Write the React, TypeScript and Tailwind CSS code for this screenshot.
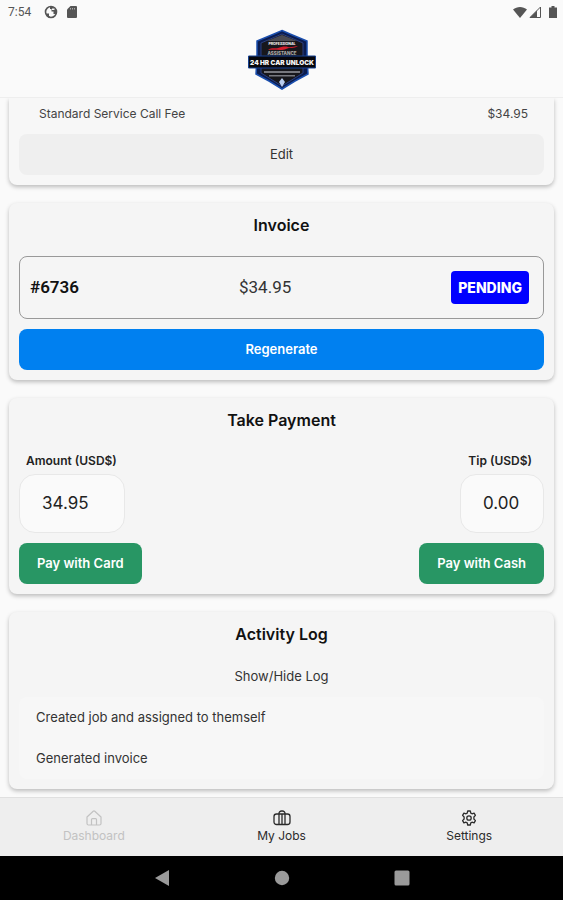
import { useState } from "react";
import type { ReactNode } from "react";

const activity = ["Created job and assigned to themself", "Generated invoice"];

function StatusBar() {
  return (
    <div className="flex h-6 items-center justify-between pl-2 pr-1 text-[#555]">
      <div className="flex items-center">
        <span className="w-9 font-[Roboto,sans-serif] text-xs">7:54</span>
        <svg viewBox="0 0 14 14" className="h-[14px] w-[14px]" aria-hidden="true">
          <circle cx="7" cy="7" r="5.5" fill="none" stroke="currentColor" strokeWidth="1.6" />
          <path d="M7 1.500a5.500 5.500 0 0 1 5 7.500H9.500V6.500H7.500V4H6V2z" fill="currentColor" />
          <path d="M8 3.500h2.500V5H8z" fill="#fafafa" />
          <path d="M2 8.500h3V11l2 1.500H5L2.500 10.500z" fill="currentColor" />
        </svg>
        <svg viewBox="0 0 12 14" className="ml-2 h-[14px] w-3" aria-hidden="true">
          <path d="M4.500 1H10a1 1 0 0 1 1 1v10a1 1 0 0 1-1 1H2a1 1 0 0 1-1-1V4.500z" fill="currentColor" />
          <path d="M4.500 3v1.500M6.500 3v1.500M8.500 3v1.500" stroke="#aaa" strokeWidth="1" />
        </svg>
      </div>
      <div className="flex items-center gap-[2px]">
        <svg viewBox="0 0 14 12" className="h-3 w-[14px]" aria-hidden="true">
          <path d="M0 3.500C4 0 10 0 14 3.500L7 12z" fill="currentColor" />
        </svg>
        <svg viewBox="0 0 12 12" className="h-3 w-3" aria-hidden="true">
          <path d="M11.500 1v10.500H1z" fill="none" stroke="currentColor" />
          <path d="M8 4.500v7H1z" fill="currentColor" />
        </svg>
        <svg viewBox="0 0 12 14" className="ml-1 h-[14px] w-3" aria-hidden="true">
          <path d="M4.500 1h3v1.500H10V13H2V2.500h2.500z" fill="currentColor" />
        </svg>
      </div>
    </div>
  );
}

function Logo() {
  return (
    <svg viewBox="0 0 70 62" className="h-[62px] w-[70px]" role="img" aria-label="24 HR Car Unlock">
      <path d="M35 1.500 43 5l17 7v16l1 17-13 7-13 8-13-8-13-7 1-17V12l17-7z" fill="#0b1c4f" stroke="#1b4fae" strokeWidth="1.500" />
      <path d="M35 5 56 14v30L35 57 14 44V14z" fill="#17171c" stroke="#2a3f80" />
      <path d="M20 12 35 6l15 6z" fill="#4b4b52" />
      <text x="35" y="15.500" textAnchor="middle" fontSize="3.500" fontWeight="800" fill="#eee">PROFESSIONAL</text>
      <path d="M21 21c4-3 7-1 10-2s7-2 10-1 6-1 10-1c-5 3-8 1-12 3s-11 0-18 1z" fill="#d31d2c" />
      <text x="35" y="25.500" textAnchor="middle" fontSize="4.500" fontWeight="800" fill="#aaa">ASSISTANCE</text>
      <path d="M1.500 27h67v12h-67z" fill="#07070c" stroke="#16418f" strokeWidth="1" />
      <text x="35" y="35.500" textAnchor="middle" fontSize="6.500" fontWeight="900" fill="#f4f4f4">24 HR CAR UNLOCK</text>
      <path d="M17 42h36v2H17zM22 46h26v1.500H22z" fill="#77787f" />
      <path d="m35 49 3 4-3 5-3-5z" fill="#b9cdf0" />
    </svg>
  );
}

function HomeIcon() {
  return (
    <svg viewBox="0 0 16 16" className="h-4 w-4" fill="none" stroke="currentColor" strokeWidth="1.200" aria-hidden="true">
      <path d="M1 7 7.200 1.300a1.200 1.200 0 0 1 1.600 0L15 7v6.500A1.500 1.500 0 0 1 13.500 15h-11A1.500 1.500 0 0 1 1 13.500zM5.500 15V9.500c0-.6.3-.9.900-.9h3.200c.6 0 .9.3.9.900V15" strokeLinejoin="round" />
    </svg>
  );
}

function CaseIcon() {
  return (
    <svg viewBox="0 0 18 16" className="h-4 w-[18px]" fill="none" stroke="currentColor" strokeWidth="1.300" aria-hidden="true">
      <rect x="1" y="4" width="16" height="10.500" rx="2.500" />
      <path d="M6 14.500V3.500A2.500 2.500 0 0 1 8.500 1h1A2.500 2.500 0 0 1 12 3.500v11M9 4v10.500" />
    </svg>
  );
}

function GearIcon() {
  return (
    <svg viewBox="0 0 16 16" className="h-4 w-4" fill="none" stroke="currentColor" strokeWidth="1.300" strokeLinejoin="round" aria-hidden="true">
      <path d="M6.700 1h2.600l.5 2.100 1.200.7 2.100-.6 1.300 2.200L12.900 7v2l1.500 1.600-1.300 2.200-2.100-.6-1.200.7L9.300 15H6.700l-.5-2.100-1.200-.7-2.100.6-1.300-2.200L3.100 9V7L1.600 5.400l1.300-2.200 2.100.6 1.200-.7z" />
      <circle cx="8" cy="8" r="2.200" />
    </svg>
  );
}

function Card({ title, children }: { title: string; children: ReactNode }) {
  return (
    <section className="rounded-lg bg-[#f5f5f5] p-[10px] shadow-[0_2px_4px_rgba(0,0,0,0.25)]">
      <h2 className="text-center text-base font-semibold leading-6 text-[#111]">{title}</h2>
      {children}
    </section>
  );
}

function NavItem({ label, icon, muted }: { label: string; icon: ReactNode; muted?: boolean }) {
  return (
    <a
      href="#"
      className={`flex flex-1 flex-col items-center pt-3 pb-[11px] text-xs leading-[19px] ${
        muted ? "text-[#c2c2c2]" : "text-[#2b2b2b]"
      }`}
    >
      {icon}
      {label}
    </a>
  );
}

export default function App() {
  const [amount, setAmount] = useState("34.95");
  const [tip, setTip] = useState("0.00");
  const [showLog, setShowLog] = useState(true);

  return (
    <div className="flex min-h-screen flex-col bg-[#fafafa] font-[Inter,sans-serif] text-[13px] leading-[21px] text-[#444]">
      <header className="border-b border-[#eee]">
        <StatusBar />
        <div className="flex justify-center pt-[5px] pb-[6px]">
          <Logo />
        </div>
      </header>

      <main className="flex flex-1 flex-col gap-[18px] overflow-hidden px-[9px] pb-2">
        <section className="rounded-b-lg bg-[#f7f7f7] px-[10px] pt-[6px] pb-[10px] shadow-[0_2px_4px_rgba(0,0,0,0.25)]">
          <div className="flex justify-between pl-5 pr-4 text-xs leading-5">
            <span>Standard Service Call Fee</span>
            <span>$34.95</span>
          </div>
          <button type="button" className="mt-[10px] w-full rounded-lg bg-[#efefef] py-[10px] text-[#333]">
            Edit
          </button>
        </section>

        <Card title="Invoice">
          <div className="mt-[19px] flex items-center justify-between rounded-lg border border-[#999] py-[14px] pl-[10px] pr-[14px] font-[Roboto,sans-serif] text-[17px]">
            <span className="font-semibold text-[#111]">#6736</span>
            <span className="text-[#333]">$34.95</span>
            <span className="rounded-sm bg-[#0000ff] px-[7px] py-[6px] font-[Inter,sans-serif] text-sm font-extrabold leading-[21px] text-white">
              PENDING
            </span>
          </div>
          <button type="button" className="mt-[10px] w-full rounded-lg bg-[#0080f0] py-[10px] font-semibold text-white">
            Regenerate
          </button>
        </Card>

        <Card title="Take Payment">
          <div className="mt-[19px] flex justify-between">
            <div className="flex flex-col items-start">
              <label htmlFor="amount" className="px-[7px] text-xs font-semibold leading-5 text-[#222]">
                Amount (USD$)
              </label>
              <input
                id="amount"
                value={amount}
                onChange={(e) => setAmount(e.target.value)}
                className="mt-[3px] mb-[10px] w-[106px] rounded-2xl border border-[#e8e8e8] bg-[#fafafa] py-4 pl-[22px] pr-4 text-[17px] leading-[25px] text-[#222]"
              />
              <button type="button" className="rounded-lg bg-[#289664] px-[18px] py-[10px] font-semibold text-white">
                Pay with Card
              </button>
            </div>
            <div className="flex flex-col items-end">
              <label htmlFor="tip" className="px-3 text-xs font-semibold leading-5 text-[#222]">
                Tip (USD$)
              </label>
              <input
                id="tip"
                value={tip}
                onChange={(e) => setTip(e.target.value)}
                className="mt-[3px] mb-[10px] w-[84px] rounded-2xl border border-[#e8e8e8] bg-[#fafafa] py-4 pl-[22px] pr-3 text-[17px] leading-[25px] text-[#222]"
              />
              <button type="button" className="rounded-lg bg-[#289664] px-[18px] py-[10px] font-semibold text-white">
                Pay with Cash
              </button>
            </div>
          </div>
        </Card>

        <Card title="Activity Log">
          <button type="button" onClick={() => setShowLog(!showLog)} className="mt-[10px] w-full py-[10px] text-[#333]">
            Show/Hide Log
          </button>
          {showLog && (
            <ul className="rounded-lg bg-[#f7f7f7] px-[17px] text-[#333]">
              {activity.map((entry) => (
                <li key={entry} className="py-[10px]">
                  {entry}
                </li>
              ))}
            </ul>
          )}
        </Card>
      </main>

      <nav className="flex border-t border-[#e0e0e0] bg-[#eee]">
        <NavItem label="Dashboard" icon={<HomeIcon />} muted />
        <NavItem label="My Jobs" icon={<CaseIcon />} />
        <NavItem label="Settings" icon={<GearIcon />} />
      </nav>

      <div className="flex h-11 items-center justify-center gap-[104px] bg-black text-[#9a9a9a]">
        <button type="button" aria-label="Back">
          <svg viewBox="0 0 16 16" className="h-4 w-4" fill="currentColor">
            <path d="M1 8 15 0v16z" />
          </svg>
        </button>
        <button type="button" aria-label="Home">
          <svg viewBox="0 0 16 16" className="h-4 w-4" fill="currentColor">
            <circle cx="8" cy="8" r="7.200" />
          </svg>
        </button>
        <button type="button" aria-label="Recents">
          <svg viewBox="0 0 16 16" className="h-4 w-4" fill="currentColor">
            <rect x="0.500" y="0.500" width="15" height="15" rx="1.500" />
          </svg>
        </button>
      </div>
    </div>
  );
}
